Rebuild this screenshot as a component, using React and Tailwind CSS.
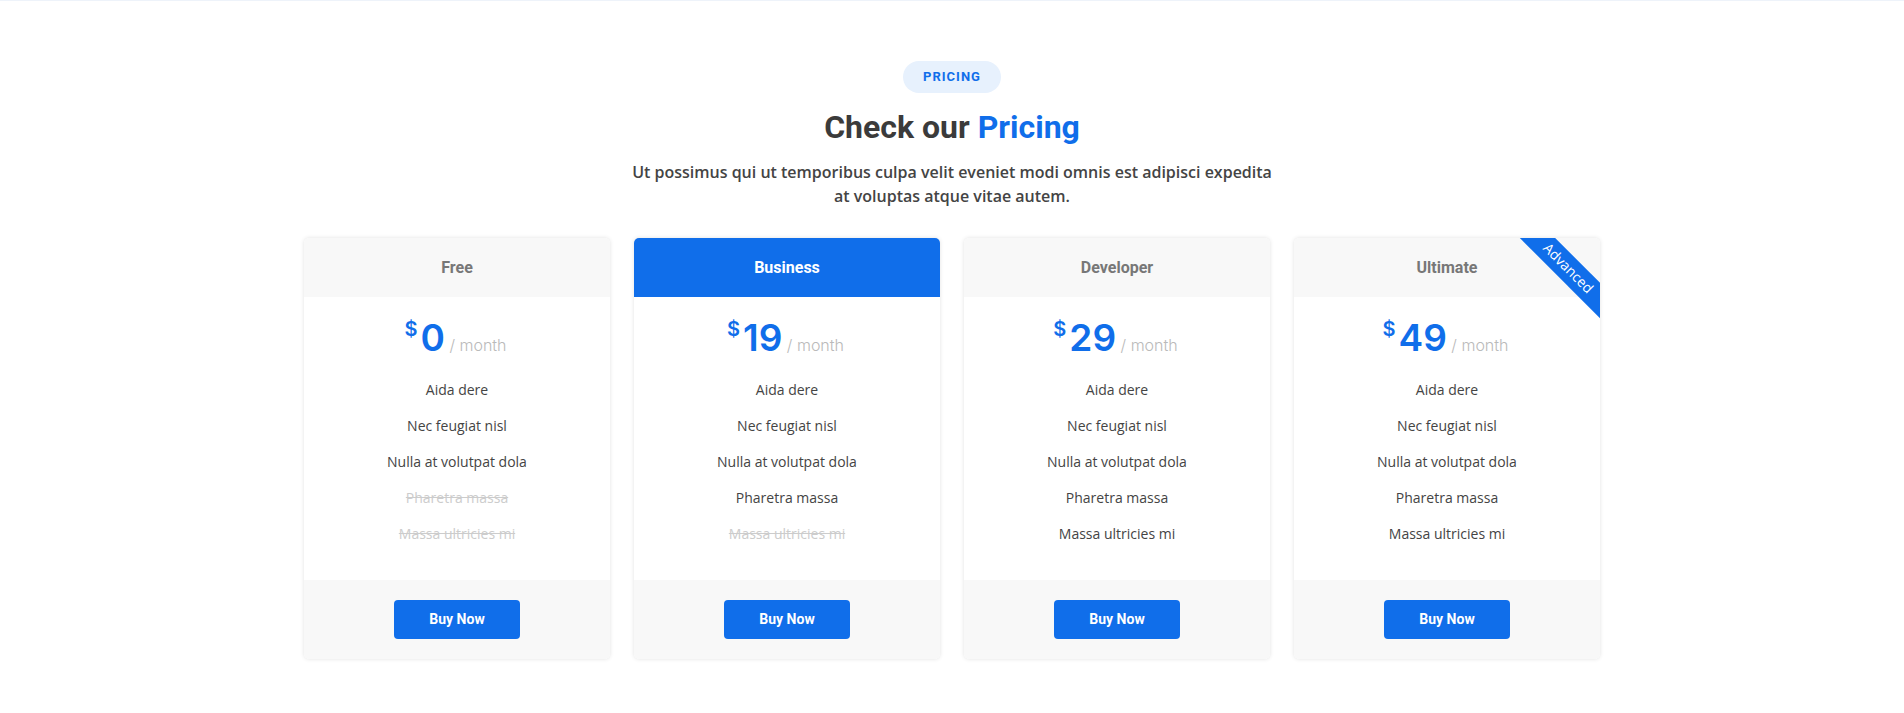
import React from "react";

const plans = [
  { name: "Free", price: "0", na: [3, 4] },
  { name: "Business", price: "19", na: [4], featured: true },
  { name: "Developer", price: "29", na: [] },
  { name: "Ultimate", price: "49", na: [], advanced: true },
];

const features = [
  "Aida dere",
  "Nec feugiat nisl",
  "Nulla at volutpat dola",
  "Pharetra massa",
  "Massa ultricies mi",
];

function Card({ plan }) {
  return (
    <div className="relative overflow-hidden rounded-[5px] bg-white text-center shadow-[0_0_4px_rgba(0,0,0,0.12)]">
      <h3
        className={
          "px-[15px] py-5 text-[16px] leading-[1.2] font-bold font-['Roboto',sans-serif] " +
          (plan.featured ? "bg-[#106eea] text-white" : "bg-[#f8f8f8] text-[#777777]")
        }
      >
        {plan.name}
      </h3>
      {plan.advanced && (
        <span className="absolute top-[18px] right-[-68px] z-10 w-[200px] rotate-45 bg-[#106eea] pt-px pb-[3px] text-[14px] leading-[1.5] text-white font-['Open_Sans',sans-serif]">
          Advanced
        </span>
      )}
      <div className="px-5 pt-5">
        <h4 className="mb-5 h-[43px] text-[37px] leading-[42px] font-semibold text-[#106eea] font-['Inter',sans-serif]">
          <span className="relative top-[-15px] left-[-3px] text-[20px] leading-none">$</span>
          {plan.price}
          <span className="text-[16px] leading-none font-light text-[#bababa]"> / month</span>
        </h4>
        <ul className="text-[14px] leading-[20px] text-[#444444] font-['Open_Sans',sans-serif]">
          {features.map((f, i) => (
            <li
              key={f}
              className={"pb-4 " + (plan.na.includes(i) ? "text-[#cccccc] line-through" : "")}
            >
              {f}
            </li>
          ))}
        </ul>
      </div>
      <div className="mt-5 bg-[#f8f8f8] px-[15px] py-5">
        <a
          href="#"
          className="inline-flex h-[39px] w-[126px] items-center justify-center rounded-[4px] bg-[#106eea] text-[14px] font-bold text-white font-['Roboto',sans-serif]"
        >
          Buy Now
        </a>
      </div>
    </div>
  );
}

export default function App() {
  return (
    <div className="border-t border-[#eef3fa] bg-white font-['Open_Sans',sans-serif] text-[#444444]">
      <section className="py-[60px]">
        <div className="mx-auto w-[1296px]">
          <div className="pb-[30px] text-center">
            <h2 className="inline-block rounded-full bg-[#e7f1fd] px-5 py-2 text-[13px] leading-[1.2] font-bold uppercase tracking-[1px] text-[#106eea] font-['Roboto',sans-serif]">
              Pricing
            </h2>
            <h3 className="mt-[15px] text-[32px] leading-[1.2] font-bold text-[#3b3b3b] font-['Roboto',sans-serif]">
              Check our <span className="text-[#106eea]">Pricing</span>
            </h3>
            <p className="mx-auto mt-[14px] w-[648px] text-[16px] leading-6 font-semibold text-[#444444]">
              Ut possimus qui ut temporibus culpa velit eveniet modi omnis est adipisci expedita at voluptas atque vitae autem.
            </p>
          </div>
          <div className="grid grid-cols-4 gap-6">
            {plans.map((p) => (
              <Card key={p.name} plan={p} />
            ))}
          </div>
        </div>
      </section>
    </div>
  );
}
